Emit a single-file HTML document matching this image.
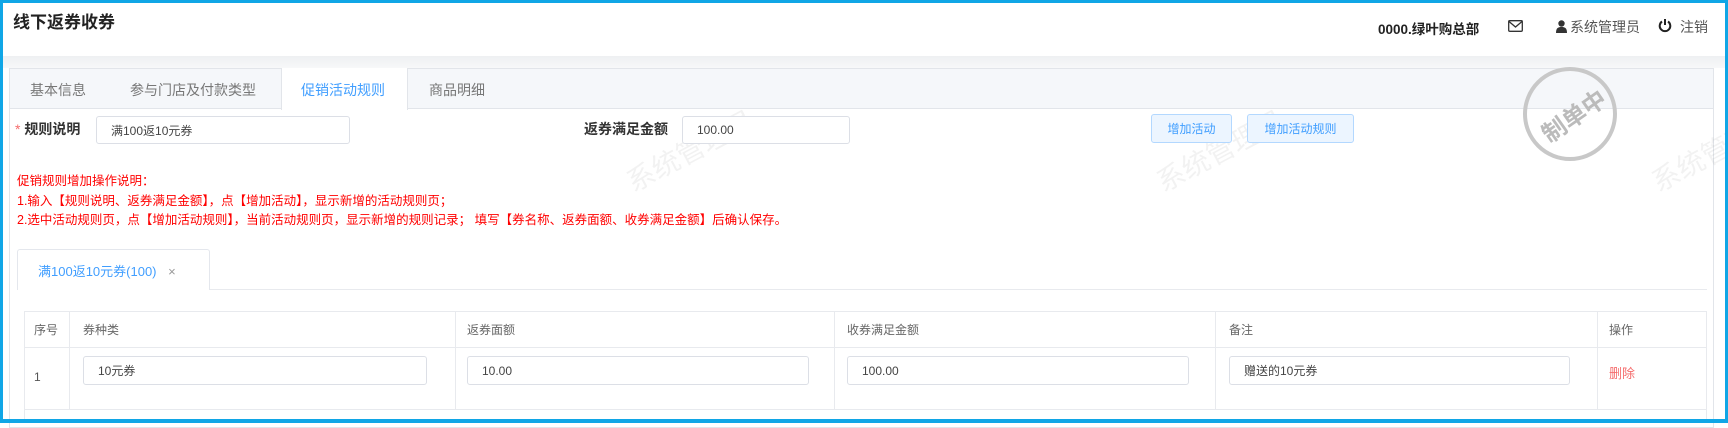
<!DOCTYPE html>
<html><head><meta charset="utf-8"><style>
*{box-sizing:border-box;margin:0;padding:0}
body{width:1728px;height:423px;overflow:hidden;background:#fff;font-family:"Liberation Sans","Noto Sans CJK SC",sans-serif;position:relative;color:#333}
.frame{position:absolute;inset:0;border:3px solid #10a6e6;border-bottom-width:4px;z-index:50;pointer-events:none}
.a{position:absolute;white-space:nowrap}
.hdr{position:absolute;left:0;top:0;width:1728px;height:56px;background:#fff}
.band{position:absolute;left:0;top:56px;width:1728px;height:12px;background:linear-gradient(#eef0f2,#f7f8f9)}
.panel{position:absolute;left:9px;top:68px;width:1705px;height:360px;border:1px solid #e2e5ea;background:#fff}
.tabbar{position:absolute;left:9px;top:68px;width:1705px;height:41px;background:#f5f7fa;border:1px solid #e2e5ea}
.tab{position:absolute;top:80px;font-size:14px;color:#777}
.inp{position:absolute;border:1px solid #dcdfe6;border-radius:3px;background:#fff;font-size:12px;color:#444;padding-left:14px;display:flex;align-items:center}
.btn{position:absolute;border:1px solid #b3d8ff;background:#ecf5ff;color:#409eff;font-size:12px;border-radius:3px;display:flex;align-items:center;justify-content:center}
.red{position:absolute;left:17px;font-size:12.5px;color:#f00;white-space:nowrap}
.vl{position:absolute;width:1px;background:#e8eaee}
.hl{position:absolute;height:1px;background:#e8eaee}
.th{position:absolute;top:321px;font-size:12px;color:#666}
.wm{position:absolute;font-size:28px;color:rgba(0,0,0,.05);transform:rotate(-28deg);white-space:nowrap}
</style></head><body>
<div class="hdr"></div>
<div class="a" style="left:13px;top:8px;font-size:17px;font-weight:bold;color:#222">线下返券收券</div>
<div class="a" style="left:1378px;top:18px;font-size:13.5px;font-weight:bold;color:#222">0000.绿叶购总部</div>
<svg class="a" style="left:1508px;top:20px" width="15" height="12" viewBox="0 0 15 12"><rect x="0.7" y="0.7" width="13.6" height="10.6" rx="1" fill="none" stroke="#333" stroke-width="1.3"/><path d="M1 1.5 L7.5 7 L14 1.5" fill="none" stroke="#333" stroke-width="1.3"/></svg>
<svg class="a" style="left:1556px;top:20px" width="11" height="13" viewBox="0 0 11 13"><circle cx="5.5" cy="3.5" r="3.2" fill="#333"/><path d="M0 13 C0 8 2 7 5.5 7 C9 7 11 8 11 13Z" fill="#333"/></svg>
<div class="a" style="left:1570px;top:17px;font-size:14px;color:#555">系统管理员</div>
<svg class="a" style="left:1658px;top:18px" width="14" height="15" viewBox="0 0 14 15"><path d="M4 3.5 A5.3 5.3 0 1 0 10 3.5" fill="none" stroke="#222" stroke-width="2"/><line x1="7" y1="1" x2="7" y2="7" stroke="#222" stroke-width="2"/></svg>
<div class="a" style="left:1680px;top:17px;font-size:14px;color:#555">注销</div>
<div class="band"></div>
<div class="panel"></div>
<div class="tabbar"></div>
<div class="a" style="left:281px;top:68px;width:127px;height:42px;background:#fff;border-left:1px solid #e2e5ea;border-right:1px solid #e2e5ea"></div>
<div class="tab" style="left:30px">基本信息</div>
<div class="tab" style="left:130px">参与门店及付款类型</div>
<div class="tab" style="left:301px;color:#409eff">促销活动规则</div>
<div class="tab" style="left:429px">商品明细</div>
<div class="wm" style="left:620px;top:130px">系统管理员</div>
<div class="wm" style="left:1150px;top:130px">系统管理员</div>
<div class="wm" style="left:1645px;top:130px">系统管理员</div>
<div class="a" style="left:15px;top:119px;font-size:14px;font-weight:bold;color:#333"><span style="color:#f56c6c;font-weight:normal">*</span> 规则说明</div>
<div class="inp" style="left:96px;top:116px;width:254px;height:28px">满100返10元券</div>
<div class="a" style="left:584px;top:119px;font-size:14px;font-weight:bold;color:#333">返券满足金额</div>
<div class="inp" style="left:682px;top:116px;width:168px;height:28px">100.00</div>
<div class="btn" style="left:1151px;top:114px;width:81px;height:29px">增加活动</div>
<div class="btn" style="left:1247px;top:114px;width:107px;height:29px">增加活动规则</div>
<div class="a" style="left:1523px;top:67px;width:94px;height:94px;border:4px solid #c8c8c8;border-radius:50%"></div>
<div class="a" style="left:1537px;top:97px;font-size:24px;font-weight:bold;color:#bbb;transform:rotate(-35deg)">制单中</div>
<div class="red" style="top:170px">促销规则增加操作说明：</div>
<div class="red" style="top:190px">1.输入【规则说明、返券满足金额】，点【增加活动】，显示新增的活动规则页；</div>
<div class="red" style="top:209px">2.选中活动规则页，点【增加活动规则】，当前活动规则页，显示新增的规则记录；  填写【券名称、返券面额、收券满足金额】后确认保存。</div>
<div class="hl" style="left:18px;top:289px;width:1689px"></div>
<div class="a" style="left:17px;top:249px;width:193px;height:41px;background:#fff;border:1px solid #e4e7ed;border-bottom:none;border-radius:3px 3px 0 0"></div>
<div class="a" style="left:38px;top:261px;font-size:13px;color:#409eff">满100返10元券(100) <span style="color:#999;margin-left:8px">×</span></div>
<div class="hl" style="left:24px;top:311px;width:1682px"></div>
<div class="hl" style="left:24px;top:347px;width:1682px"></div>
<div class="hl" style="left:24px;top:409px;width:1682px"></div>
<div class="vl" style="left:24px;top:311px;height:112px"></div>
<div class="vl" style="left:69px;top:311px;height:98px"></div>
<div class="vl" style="left:455px;top:311px;height:98px"></div>
<div class="vl" style="left:834px;top:311px;height:98px"></div>
<div class="vl" style="left:1215px;top:311px;height:98px"></div>
<div class="vl" style="left:1597px;top:311px;height:98px"></div>
<div class="vl" style="left:1706px;top:311px;height:112px"></div>
<div class="th" style="left:34px">序号</div>
<div class="th" style="left:83px">券种类</div>
<div class="th" style="left:467px">返券面额</div>
<div class="th" style="left:847px">收券满足金额</div>
<div class="th" style="left:1229px">备注</div>
<div class="th" style="left:1609px">操作</div>
<div class="a" style="left:34px;top:370px;font-size:12px;color:#555">1</div>
<div class="inp" style="left:83px;top:356px;width:344px;height:29px">10元券</div>
<div class="inp" style="left:467px;top:356px;width:342px;height:29px">10.00</div>
<div class="inp" style="left:847px;top:356px;width:342px;height:29px">100.00</div>
<div class="inp" style="left:1229px;top:356px;width:341px;height:29px">赠送的10元券</div>
<div class="a" style="left:1609px;top:363px;font-size:13px;color:#f56c6c">删除</div>
<div class="frame"></div>
</body></html>
